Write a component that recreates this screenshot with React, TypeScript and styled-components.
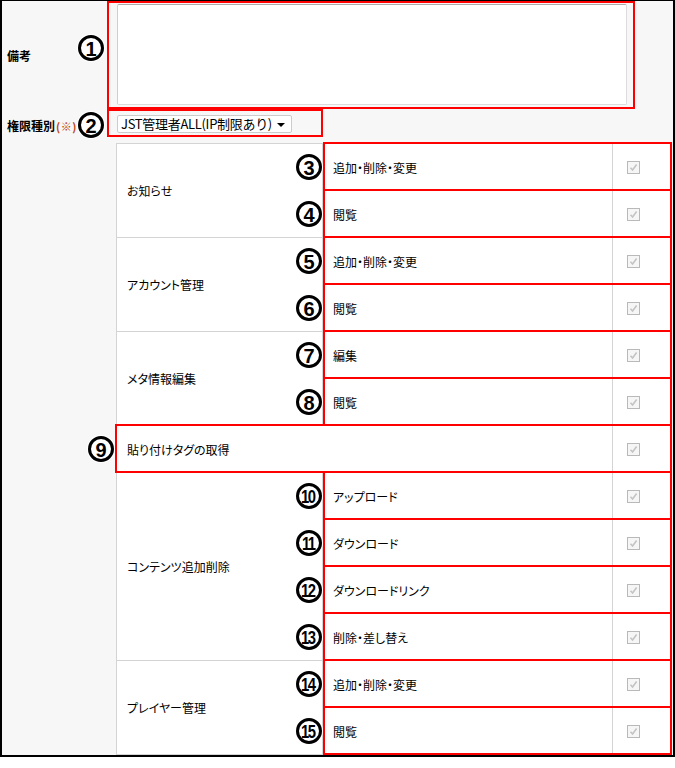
import React from 'react';
import styled, { createGlobalStyle } from 'styled-components';

const GlobalStyle = createGlobalStyle`
    html, body {
        margin: 0;
        padding: 0;
        background: #ffffff;
    }
    body {
        font-family: "Noto Sans CJK JP", "Liberation Sans", sans-serif;
        font-size: 12px;
        color: #000000;
    }
`;

type SubItem = { no: number; label: string };
type Group = { title: string; items: SubItem[]; merged?: boolean };

const groups: Group[] = [
    { title: 'お知らせ', items: [{ no: 3, label: '追加・削除・変更' }, { no: 4, label: '閲覧' }] },
    { title: 'アカウント管理', items: [{ no: 5, label: '追加・削除・変更' }, { no: 6, label: '閲覧' }] },
    { title: 'メタ情報編集', items: [{ no: 7, label: '編集' }, { no: 8, label: '閲覧' }] },
    { title: '貼り付けタグの取得', items: [{ no: 9, label: '' }], merged: true },
    {
        title: 'コンテンツ追加削除',
        items: [
            { no: 10, label: 'アップロード' },
            { no: 11, label: 'ダウンロード' },
            { no: 12, label: 'ダウンロードリンク' },
            { no: 13, label: '削除・差し替え' },
        ],
    },
    { title: 'プレイヤー管理', items: [{ no: 14, label: '追加・削除・変更' }, { no: 15, label: '閲覧' }] },
];

function Badge({ no, raise }: { no: number; raise?: number }) {
    return (
        <Circle $raise={raise || 0}>
            <Digits $wide={no >= 10}>{no}</Digits>
        </Circle>
    );
}

function CheckMark() {
    return (
        <Check>
            <svg width="9" height="9" viewBox="0 0 9 9">
                <path d="M1.5 4.8 L3.6 7 L7.6 1.6" fill="none" stroke="#c4c4c4" strokeWidth="1.6" />
            </svg>
        </Check>
    );
}

function App() {
    return (
        <>
            <GlobalStyle />
            <Frame>
                <FormRow>
                    <FieldLabel>
                        <span>備考</span>
                        <Badge no={1} raise={14} />
                    </FieldLabel>
                    <NoteBox>
                        <TextArea />
                    </NoteBox>
                </FormRow>
                <FormRow>
                    <FieldLabel $pad={3}>
                        <span>
                            権限種別<Required>(※)</Required>
                        </span>
                        <Badge no={2} />
                    </FieldLabel>
                    <SelectBox>
                        <FakeSelect>
                            <span>JST管理者ALL(IP制限あり)</span>
                            <Arrow />
                        </FakeSelect>
                    </SelectBox>
                </FormRow>
                <Table>
                    {groups.map((g) =>
                        g.merged ? (
                            <GroupRow key={g.title}>
                                <MergedRow>
                                    <MergedLabel>{g.title}</MergedLabel>
                                    <CheckCell>
                                        <CheckMark />
                                    </CheckCell>
                                    <BadgeSlot $gap={3}>
                                        <Badge no={g.items[0].no} />
                                    </BadgeSlot>
                                </MergedRow>
                            </GroupRow>
                        ) : (
                            <GroupRow key={g.title}>
                                <Category>{g.title}</Category>
                                <SubList>
                                    {g.items.map((it) => (
                                        <SubRow key={it.no}>
                                            <SubLabel>{it.label}</SubLabel>
                                            <CheckCell>
                                                <CheckMark />
                                            </CheckCell>
                                            <BadgeSlot $gap={1}>
                                                <Badge no={it.no} />
                                            </BadgeSlot>
                                        </SubRow>
                                    ))}
                                </SubList>
                            </GroupRow>
                        )
                    )}
                </Table>
            </Frame>
        </>
    );
}

export default App;


const Frame = styled.div`
    box-sizing: border-box;
    width: 675px;
    height: 757px;
    background: #f7f7f7;
    border: 2px solid #000000;
    border-top-width: 1px;
    font-family: "Noto Sans CJK JP", "Liberation Sans", sans-serif;
    font-feature-settings: "palt";
`;

const FormRow = styled.div`
    display: flex;
    align-items: stretch;
`;

const FieldLabel = styled.div<{ $pad?: number }>`
    box-sizing: border-box;
    width: 105px;
    display: flex;
    align-items: center;
    justify-content: space-between;
    padding: ${(p) => p.$pad || 0}px 3px 0 5px;
    font-weight: 700;
    font-size: 12px;
`;

const Required = styled.span`
    color: #c0420c;
    font-size: 11px;
    font-weight: 700;
    margin-left: 1px;
    letter-spacing: 0.5px;
`;

const Circle = styled.span<{ $raise: number }>`
    box-sizing: border-box;
    width: 26px;
    height: 26px;
    border: 3px solid #000000;
    border-radius: 50%;
    background: #ffffff;
    box-shadow: 0 0 0 1px #ffffff;
    display: inline-flex;
    align-items: center;
    justify-content: center;
    margin-bottom: ${(p) => p.$raise}px;
    flex-shrink: 0;
    overflow: hidden;
`;

const Digits = styled.span<{ $wide: boolean }>`
    font-family: "Liberation Sans", Arial, sans-serif;
    font-weight: 700;
    font-size: ${(p) => (p.$wide ? 19 : 20)}px;
    line-height: 1;
    letter-spacing: ${(p) => (p.$wide ? '-2px' : '0')};
    transform: ${(p) => (p.$wide ? 'scaleX(0.78) translateX(-1px)' : 'none')};
    color: #000000;
    font-feature-settings: normal;
    margin-top: 1px;
`;

const NoteBox = styled.div`
    box-sizing: border-box;
    width: 528px;
    border: 2px solid #ff0000;
    padding: 1px 6px 2px 8px;
`;

const TextArea = styled.div`
    box-sizing: border-box;
    width: 510px;
    height: 101px;
    background: #ffffff;
    border: 1px solid #dcdcdc;
    border-top-color: #a9a9a9;
    border-left-color: #cfcfcf;
    border-radius: 2px;
`;

const SelectBox = styled.div`
    box-sizing: border-box;
    width: 216px;
    height: 28px;
    border: 2px solid #ff0000;
    padding: 4px 0 0 8px;
`;

const FakeSelect = styled.div`
    box-sizing: border-box;
    width: 175px;
    height: 18px;
    background: #ffffff;
    border: 1px solid #cccccc;
    border-radius: 2px;
    display: flex;
    align-items: center;
    justify-content: space-between;
    padding: 0 6px 0 3px;
    font-size: 13px;
    line-height: 16px;
    font-feature-settings: normal;
    letter-spacing: -0.3px;
`;

const Arrow = styled.span`
    width: 0;
    height: 0;
    border-left: 4px solid transparent;
    border-right: 4px solid transparent;
    border-top: 4px solid #000000;
    margin-top: 1px;
`;

const Table = styled.div`
    box-sizing: border-box;
    width: 556px;
    margin: 5px 0 0 114px;
    background: #ffffff;
    border-bottom: 1px solid #d4d4d4;
`;

const GroupRow = styled.div`
    display: flex;
`;

const Category = styled.div`
    box-sizing: border-box;
    width: 207px;
    display: flex;
    align-items: center;
    padding-left: 10px;
    border-top: 1px solid #d4d4d4;
    border-left: 1px solid #d4d4d4;
    border-right: 1px solid #d4d4d4;
    font-size: 12px;
`;

const SubList = styled.div`
    width: 349px;
    display: flex;
    flex-direction: column;
`;

const SubRow = styled.div`
    position: relative;
    box-sizing: border-box;
    height: 47px;
    display: flex;
    border-top: 1px solid #d4d4d4;
    &::after {
        content: '';
        position: absolute;
        top: -2px;
        bottom: -1px;
        left: 0;
        right: 0;
        border: 2px solid #ff0000;
        pointer-events: none;
    }
`;

const MergedRow = styled(SubRow)`
    width: 556px;
    border-left: 1px solid #d4d4d4;
    &::after {
        left: -2px;
    }
`;

const SubLabel = styled.div`
    box-sizing: border-box;
    width: 290px;
    display: flex;
    align-items: center;
    padding-left: 10px;
    border-right: 1px solid #d4d4d4;
    font-size: 12px;
`;

const MergedLabel = styled(SubLabel)`
    width: 496px;
`;

const CheckCell = styled.div`
    flex: 1;
    display: flex;
    align-items: center;
    padding: 1px 0 0 14px;
`;

const Check = styled.span`
    box-sizing: border-box;
    width: 13px;
    height: 13px;
    border: 1px solid #b9b9b9;
    background: #f6f6f6;
    display: flex;
    align-items: center;
    justify-content: center;
`;

const BadgeSlot = styled.div<{ $gap: number }>`
    position: absolute;
    right: calc(100% + ${(p) => p.$gap}px);
    top: 50%;
    transform: translateY(-50%);
    display: flex;
    z-index: 2;
`;
